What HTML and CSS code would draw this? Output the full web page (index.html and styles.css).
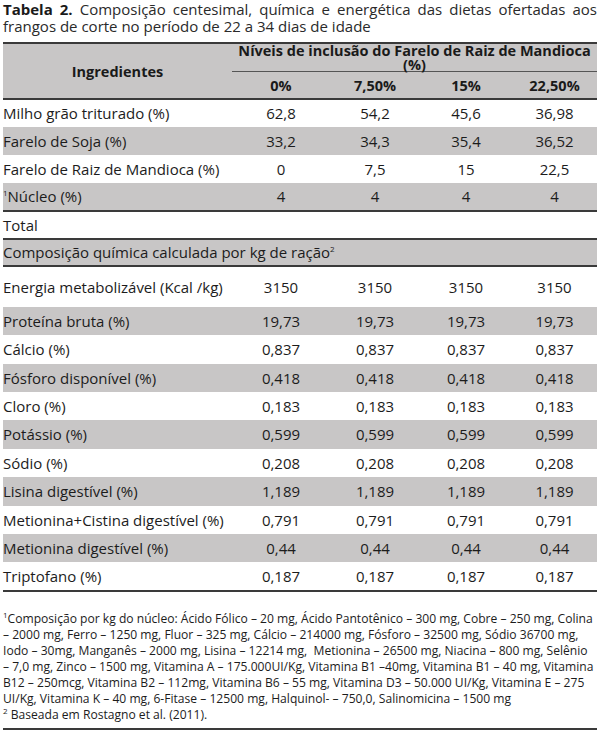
FILE: index.html
```html
<!DOCTYPE html>
<html lang="pt">
<head>
<meta charset="utf-8">
<title>Tabela 2</title>
<link rel="stylesheet" href="styles.css">
</head>
<body>
<div class="page">
  <p class="caption"><b>Tabela 2.</b> Composição centesimal, química e energética das dietas ofertadas aos frangos de corte no período de 22 a 34 dias de idade</p>
  <table class="data">
    <colgroup>
      <col class="c1"><col class="c2"><col class="c3"><col class="c4"><col class="c5">
    </colgroup>
    <thead>
      <tr class="h1">
        <th rowspan="2" class="ing">Ingredientes</th>
        <th colspan="4" class="niveis">Níveis de inclusão do Farelo de Raiz de Mandioca<br>(%)</th>
      </tr>
      <tr class="h2">
        <th>0%</th><th>7,50%</th><th>15%</th><th>22,50%</th>
      </tr>
    </thead>
    <tbody class="ingr">
      <tr><td>Milho grão triturado (%)</td><td>62,8</td><td>54,2</td><td>45,6</td><td>36,98</td></tr>
      <tr class="g"><td>Farelo de Soja (%)</td><td>33,2</td><td>34,3</td><td>35,4</td><td>36,52</td></tr>
      <tr><td>Farelo de Raiz de Mandioca (%)</td><td>0</td><td>7,5</td><td>15</td><td>22,5</td></tr>
      <tr class="g last"><td><sup>1</sup>Núcleo (%)</td><td>4</td><td>4</td><td>4</td><td>4</td></tr>
    </tbody>
    <tbody class="mid">
      <tr class="total"><td colspan="5">Total</td></tr>
      <tr class="g comp"><td colspan="5">Composição química calculada por kg de ração<sup>2</sup></td></tr>
    </tbody>
    <tbody class="chem">
      <tr class="energia"><td>Energia metabolizável (Kcal /kg)</td><td>3150</td><td>3150</td><td>3150</td><td>3150</td></tr>
      <tr class="g"><td>Proteína bruta (%)</td><td>19,73</td><td>19,73</td><td>19,73</td><td>19,73</td></tr>
      <tr class="t"><td>Cálcio (%)</td><td>0,837</td><td>0,837</td><td>0,837</td><td>0,837</td></tr>
      <tr class="g"><td>Fósforo disponível (%)</td><td>0,418</td><td>0,418</td><td>0,418</td><td>0,418</td></tr>
      <tr><td>Cloro (%)</td><td>0,183</td><td>0,183</td><td>0,183</td><td>0,183</td></tr>
      <tr class="g t"><td>Potássio (%)</td><td>0,599</td><td>0,599</td><td>0,599</td><td>0,599</td></tr>
      <tr><td>Sódio (%)</td><td>0,208</td><td>0,208</td><td>0,208</td><td>0,208</td></tr>
      <tr class="g t"><td>Lisina digestível (%)</td><td>1,189</td><td>1,189</td><td>1,189</td><td>1,189</td></tr>
      <tr><td>Metionina+Cistina digestível (%)</td><td>0,791</td><td>0,791</td><td>0,791</td><td>0,791</td></tr>
      <tr class="g"><td>Metionina digestível (%)</td><td>0,44</td><td>0,44</td><td>0,44</td><td>0,44</td></tr>
      <tr class="last t"><td>Triptofano (%)</td><td>0,187</td><td>0,187</td><td>0,187</td><td>0,187</td></tr>
    </tbody>
  </table>
  <div class="notes">
    <p><sup>1</sup>Composição por kg do núcleo: Ácido Fólico – 20 mg, Ácido Pantotênico – 300 mg, Cobre – 250 mg, Colina<br>– 2000 mg, Ferro – 1250 mg, Fluor – 325 mg, Cálcio – 214000 mg, Fósforo – 32500 mg, Sódio 36700 mg,<br>Iodo – 30mg, Manganês – 2000 mg, Lisina – 12214 mg,&nbsp; Metionina – 26500 mg, Niacina – 800 mg, Selênio<br>– 7,0 mg, Zinco – 1500 mg, Vitamina A – 175.000UI/Kg, Vitamina B1 –40mg, Vitamina B1 – 40 mg, Vitamina<br>B12 – 250mcg, Vitamina B2 – 112mg, Vitamina B6 – 55 mg, Vitamina D3 – 50.000 UI/Kg, Vitamina E – 275<br>UI/Kg, Vitamina K – 40 mg, 6-Fitase – 12500 mg, Halquinol- – 750,0, Salinomicina – 1500 mg</p>
    <p><sup>2</sup> Baseada em Rostagno et al. (2011).</p>
  </div>
</div>
</body>
</html>
```

FILE: styles.css
```css
html, body {
  margin: 0;
  padding: 0;
  background: #ffffff;
}
body {
  font-family: "Open Sans", "DejaVu Sans", sans-serif;
  color: #1c1c1c;
}
.page {
  padding: 1px 3px 0 3px;
}
.caption {
  margin: 0;
  font-size: 15px;
  line-height: 17px;
  text-align: justify;
  color: #2a2a2a;
}
.caption b {
  font-weight: 700;
  color: #1a1a1a;
}
.data {
  width: 594px;
  border-collapse: collapse;
  margin-top: 7px;
  font-size: 15px;
  table-layout: fixed;
}
.c1 { width: 229px; }
.c2 { width: 98px; }
.c3 { width: 90px; }
.c4 { width: 92px; }
.c5 { width: 85px; }
.data th,
.data td {
  padding: 0;
  text-align: center;
  white-space: nowrap;
}
.data td:first-child {
  text-align: left;
}
.data thead {
  background: #c8c6c6;
}
.data thead tr.h1 {
  border-top: 2px solid #3a3a3a;
}
.data thead th {
  font-weight: 700;
  font-size: 14.5px;
  color: #1a1a1a;
}
.h1 {
  height: 28px;
}
.h2 {
  height: 27px;
  border-bottom: 2px solid #3a3a3a;
}
.h2 th {
  padding-top: 1px;
}
.ing {
  vertical-align: middle;
  padding-top: 1px !important;
}
.niveis {
  vertical-align: top;
  line-height: 13.5px;
  padding-top: 0 !important;
  border-bottom: 1px solid #555;
}
.data tbody tr {
  height: 28px;
}
.data tr.g {
  background: #c8c6c6;
}
.data sup {
  font-size: 8px;
  vertical-align: 6px;
  line-height: 0;
}
.ingr tr.last {
  border-bottom: 2px solid #3a3a3a;
}
.mid tr.total {
  height: 28px;
  border-bottom: 2px solid #3a3a3a;
}
.mid tr.comp {
  height: 27px;
  border-bottom: 2px solid #3a3a3a;
}
.chem tr.energia {
  height: 41px;
}
.chem tr.t {
  height: 29px;
}
.chem tr.last {
  border-bottom: 2px solid #3a3a3a;
}
.notes {
  margin-top: 19px;
  padding-bottom: 5px;
  border-bottom: 2px solid #3a3a3a;
  font-size: 12.1px;
  line-height: 16px;
  color: #1c1c1c;
}
.notes p {
  margin: 0;
  white-space: nowrap;
}
.notes sup {
  font-size: 8px;
  vertical-align: 5px;
  line-height: 0;
}
```
